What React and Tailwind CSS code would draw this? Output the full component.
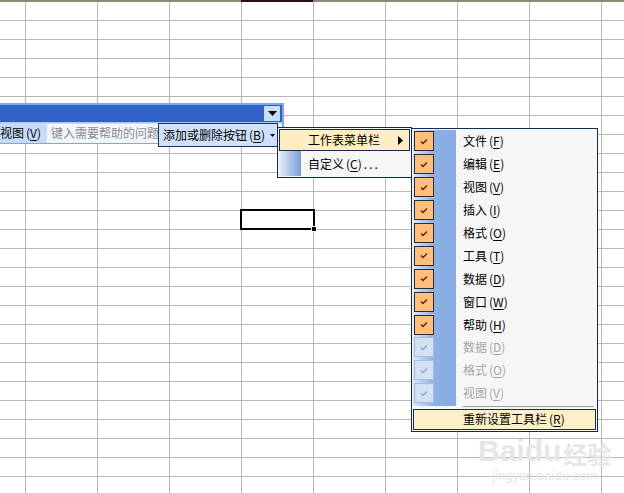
import React from "react";

const font = { fontFamily: '"Noto Sans CJK SC", "Noto Sans", sans-serif' };

const items = [
  { label: "文件", key: "F", on: true },
  { label: "编辑", key: "E", on: true },
  { label: "视图", key: "V", on: true },
  { label: "插入", key: "I", on: true },
  { label: "格式", key: "O", on: true },
  { label: "工具", key: "T", on: true },
  { label: "数据", key: "D", on: true },
  { label: "窗口", key: "W", on: true },
  { label: "帮助", key: "H", on: true },
  { label: "数据", key: "D", on: false },
  { label: "格式", key: "O", on: false },
  { label: "视图", key: "V", on: false },
];

const Check = ({ color }) => (
  <svg width="8" height="7" viewBox="0 0 8 7">
    <polyline points="1,3.5 3,5.5 7,1.5" fill="none" stroke={color} strokeWidth="1.4" />
  </svg>
);

const Key = ({ k }) => (
  <span className="ml-[2px]">
    (<span className="underline underline-offset-2">{k}</span>)
  </span>
);

const Sheet = () => {
  const rows = Array.from({ length: 26 });
  const cols = Array.from({ length: 8 });
  return (
    <div className="flex flex-col">
      {rows.map((_, r) => (
        <div key={r} className="flex h-[19px] shrink-0">
          <div className="w-[26px] shrink-0 border-r border-b border-[#b8b8b8]" />
          {cols.map((_, c) => (
            <div key={c} className="w-[72px] shrink-0 border-r border-b border-[#b8b8b8]" />
          ))}
          <div className="flex-1 border-b border-[#b8b8b8]" />
        </div>
      ))}
    </div>
  );
};

export default function App() {
  return (
    <div className="relative w-[624px] h-[493px] overflow-hidden bg-white text-[12px] text-black" style={font}>
      {/* column header edge */}
      <div className="flex h-[2px]">
        <div className="w-[241px] bg-[#8a8a7a]" />
        <div className="w-[72px] bg-[#2b0c1e]" />
        <div className="flex-1 bg-[#8a8a7a]" />
      </div>
      <Sheet />

      {/* active cell */}
      <div className="absolute left-[240px] top-[209px] w-[75px] h-[21px] border-2 border-black" />
      <div className="absolute left-[311px] top-[226px] w-[6px] h-[6px] bg-black border border-white" />

      {/* floating toolbar */}
      <div className="absolute left-0 top-[103px] w-[284px] h-[41px] bg-[#7fa6ea] flex flex-col pr-[2px] pt-[2px] pb-[1px]">
        <div className="h-[17px] bg-[#2f62c4] flex justify-end items-center pr-[2px]">
          <div className="w-[16px] h-[15px] bg-[#c9dcf8] flex items-center justify-center">
            <svg width="9" height="5" viewBox="0 0 9 5">
              <polygon points="0,0 9,0 4.5,5" fill="#000" />
            </svg>
          </div>
        </div>
        <div className="flex-1 bg-[#c7dbf8] flex items-center border-t border-[#a9c4ee]">
          <span className="w-[47px] shrink-0 whitespace-nowrap">
            视图<Key k="V" />
          </span>
          <div className="h-[19px] flex-1 bg-[#f3f6fb] text-[#8a8a8a] flex items-center pl-[4px] overflow-hidden whitespace-nowrap">
            键入需要帮助的问题
          </div>
        </div>
      </div>

      {/* add/remove buttons */}
      <div className="absolute left-[158px] top-[123px] w-[120px] h-[24px] bg-[#cfe0f8] border border-[#1d3462] flex items-center pl-[4px] whitespace-nowrap">
        添加或删除按钮<Key k="B" />
        <svg className="ml-[5px]" width="5" height="3" viewBox="0 0 5 3">
          <polygon points="0,0 5,0 2.5,3" fill="#000" />
        </svg>
      </div>

      {/* submenu 1 */}
      <div className="absolute left-[277px] top-[127px] w-[135px] h-[51px] bg-[#f6f6f6] border border-[#0f2a55] flex flex-col p-[1px]">
        <div className="absolute left-[1px] top-[1px] bottom-[1px] w-[22px] bg-gradient-to-r from-[#e7effb] to-[#7a9cd8]" />
        <div className="relative h-[22px] bg-[#ffeec4] border border-[#1a2b52] flex items-center pl-[28px] pr-[6px]">
          <span className="flex-1">工作表菜单栏</span>
          <svg width="5" height="9" viewBox="0 0 5 9">
            <polygon points="0,0 5,4.5 0,9" fill="#000" />
          </svg>
        </div>
        <div className="relative flex-1 flex items-center pl-[29px]">
          自定义<Key k="C" />
          <span className="ml-[2px] tracking-[2px]">...</span>
        </div>
      </div>

      {/* submenu 2 */}
      <div className="absolute left-[411px] top-[128px] w-[187px] h-[304px] bg-[#f6f6f6] border border-[#0f2a55] flex flex-col p-[1px]">
        <div className="absolute left-[1px] top-[1px] h-[276px] w-[43px] bg-gradient-to-r from-[#dce7f8] via-[#8db0e4] to-[#87abe2]" />
        {items.map((it, i) => (
          <div key={i} className="relative h-[22.9px] flex items-center">
            <div
              className={
                it.on
                  ? "w-[20px] h-[20px] ml-[1px] bg-[#ffc07c] border border-[#2a2a3a] flex items-center justify-center"
                  : "w-[20px] h-[20px] ml-[1px] bg-[#d3e1f5] border border-[#a8bedf] flex items-center justify-center"
              }
            >
              <Check color={it.on ? "#7a1010" : "#8fa6cc"} />
            </div>
            <span className={it.on ? "ml-[29px] whitespace-nowrap" : "ml-[29px] whitespace-nowrap text-[#a6a6a6]"}>
              {it.label}
              <Key k={it.key} />
            </span>
          </div>
        ))}
        <div className="ml-[50px] mr-[2px] mt-[1px] h-px bg-[#9a9a9a]" />
        <div className="mt-[2px] h-[21px] bg-[#ffefc8] border border-[#1a2b52] flex items-center pl-[49px] whitespace-nowrap">
          重新设置工具栏<Key k="R" />
        </div>
      </div>

      {/* watermark */}
      <div className="absolute left-[478px] top-[436px] flex flex-col items-center text-[#e6e6e6] select-none">
        <div className="flex items-end leading-none">
          <span className="text-[30px] font-bold" style={{ fontFamily: '"Liberation Sans", sans-serif' }}>Bai</span>
          <span className="text-[30px] font-bold" style={{ fontFamily: '"Liberation Sans", sans-serif' }}>du</span>
          <span className="text-[24px] font-bold ml-[2px]">经验</span>
        </div>
        <span className="text-[13px] leading-none mt-[3px]" style={{ fontFamily: '"Liberation Sans", sans-serif' }}>jingyan.baidu.com</span>
      </div>
    </div>
  );
}
